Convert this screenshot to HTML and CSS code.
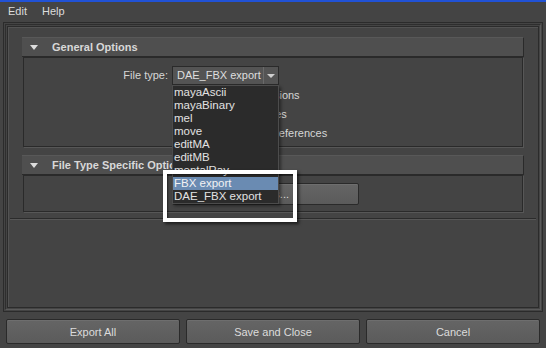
FILE: index.html
```html
<!DOCTYPE html>
<html lang="en">
<head>
  <meta charset="UTF-8" />
  <title>Export Options</title>
  <link rel="stylesheet" href="styles.css">
</head>
<body>
  <div class="window">
    <div class="topline"></div>
    <div class="menubar">
      <span>Edit</span>
      <span>Help</span>
    </div>

    <div class="frame">
      <div class="frame-mid">
        <div class="scroll">
          <div class="sections">

            <div class="section">
              <div class="section-head"><span class="tri"></span>General Options</div>
              <div class="section-body general">
                <div class="form">
                  <label class="label">File type:</label>
                  <div class="optmenu">
                    <span class="optmenu-value">DAE_FBX export</span>
                    <span class="optmenu-arrow"><span class="tri small"></span></span>
                    <ul class="optlist">
                      <li>mayaAscii</li>
                      <li>mayaBinary</li>
                      <li>mel</li>
                      <li>move</li>
                      <li>editMA</li>
                      <li>editMB</li>
                      <li>mentalRay</li>
                      <li class="selected">FBX export</li>
                      <li>DAE_FBX export</li>
                    </ul>
                  </div>
                  <div class="check"><span class="box"></span>Default file extensions</div>
                  <div class="check"><span class="box"></span>Include texture files</div>
                  <div class="check"><span class="box"></span>Export unloaded references</div>
                </div>
              </div>
            </div>

            <div class="section">
              <div class="section-head"><span class="tri"></span>File Type Specific Options</div>
              <div class="section-body specific">
                <div class="form">
                  <span></span>
                  <button class="btn small-btn">Options...</button>
                </div>
              </div>
            </div>

          </div>
        </div>
      </div>
    </div>

    <div class="buttons">
      <button class="btn">Export All</button>
      <button class="btn">Save and Close</button>
      <button class="btn">Cancel</button>
    </div>

    <div class="callout"></div>
  </div>
</body>
</html>
```

FILE: styles.css
```css
body {
  margin: 0;
  background: #444444;
  font-family: 'Liberation Sans', Arial, sans-serif;
  font-size: 11px;
  color: #d6d6d6;
}

.window {
  position: relative;
  width: 546px;
  height: 348px;
  overflow: hidden;
}

.topline {
  height: 2px;
  background: #2152d6;
}

.menubar {
  display: flex;
  gap: 15px;
  height: 18px;
  padding-left: 8px;
  align-items: center;
  color: #dcdcdc;
}

.frame {
  margin: 2px 3px 0;
  height: 290px;
  box-sizing: border-box;
  border: 1px solid #2b2b2b;
  padding: 1px;
}

.frame-mid {
  height: 100%;
  box-sizing: border-box;
  border: 1px solid #2e2e2e;
  border-right-color: #5a5a5a;
  border-bottom-color: #5a5a5a;
  padding: 1px;
}

.scroll {
  height: 100%;
  box-sizing: border-box;
  border: 1px solid #2b2b2b;
  box-shadow: inset 1px 1px 0 #535353;
}

.sections {
  margin: 0 2px;
  padding: 10px 12px 6px;
  border-bottom: 1px solid #2b2b2b;
  box-shadow: 0 1px 0 #575757;
}

.section + .section {
  margin-top: 8px;
}

.section-head {
  height: 20px;
  box-sizing: border-box;
  background: #4f4f4f;
  border-top: 1px solid #585858;
  border-right: 1px solid #2a2a2a;
  border-bottom: 1px solid #2a2a2a;
  display: flex;
  align-items: center;
  font-weight: bold;
  color: #d8d8d8;
}

.tri {
  width: 0;
  height: 0;
  border-left: 4px solid transparent;
  border-right: 4px solid transparent;
  border-top: 5px solid #dddddd;
  margin: 0 14px 0 8px;
}

.tri.small {
  margin: 0;
  border-left-width: 4px;
  border-right-width: 4px;
  border-top-width: 4px;
  border-top-color: #cfcfcf;
}

.section-body {
  margin: 0 1px;
  box-sizing: border-box;
  border: 1px solid #2a2a2a;
  box-shadow: 1px 1px 0 #575757;
}

.general {
  height: 90px;
  padding-top: 8px;
}

.specific {
  height: 37px;
  padding-top: 7px;
}

.form {
  display: grid;
  grid-template-columns: 144px 107px;
  column-gap: 4px;
  align-items: center;
}

.label {
  text-align: right;
  height: 19px;
  line-height: 19px;
}

.optmenu {
  position: relative;
  height: 19px;
  box-sizing: border-box;
  border: 1px solid #2a2a2a;
  background: #545454;
  display: flex;
  z-index: 2;
}

.optmenu-value {
  flex: 1;
  padding-left: 4px;
  line-height: 17px;
  color: #dedede;
  border-right: 1px solid #6a6a6a;
}

.optmenu-arrow {
  width: 14px;
  display: flex;
  align-items: center;
  justify-content: center;
}

.optlist {
  position: absolute;
  left: -1px;
  top: 18px;
  width: 107px;
  margin: 0;
  padding: 0;
  list-style: none;
  background: #2b2b2b;
  border: 1px solid #4c4c4c;
  box-sizing: border-box;
  box-shadow: 2px 2px 3px rgba(0, 0, 0, 0.45);
}

.optlist li {
  height: 13px;
  line-height: 13px;
  padding-left: 1px;
  color: #e2e2e2;
  font-size: 11.5px;
}

.optlist li.selected {
  background: #6a8bb2;
  color: #f2f2f2;
}

.check {
  grid-column: 2;
  height: 19px;
  display: flex;
  align-items: center;
  white-space: nowrap;
  color: #d6d6d6;
}

.form .check:first-of-type {
  margin-top: 2px;
}

.box {
  width: 11px;
  height: 11px;
  margin: 0 10px 0 8px;
  background: #2b2b2b;
  border: 1px solid #5a5a5a;
}

.btn {
  font: inherit;
  color: #dcdcdc;
  background: linear-gradient(#656565, #5b5b5b);
  border: 1px solid #2a2a2a;
  border-radius: 2px;
  box-shadow: inset 0 1px 0 #6e6e6e;
  padding: 0;
  cursor: pointer;
}

.small-btn {
  width: 187px;
  height: 22px;
}

.buttons {
  display: flex;
  gap: 6px;
  padding: 7px 6px 0;
}

.buttons .btn {
  flex: 1;
  height: 25px;
}

.callout {
  position: absolute;
  left: 163px;
  top: 170px;
  width: 134px;
  height: 52px;
  box-sizing: border-box;
  border: 4px solid #ffffff;
  box-shadow: 2px 2px 3px rgba(0, 0, 0, 0.6), inset 1px 1px 2px rgba(0, 0, 0, 0.5);
  z-index: 5;
}
```
